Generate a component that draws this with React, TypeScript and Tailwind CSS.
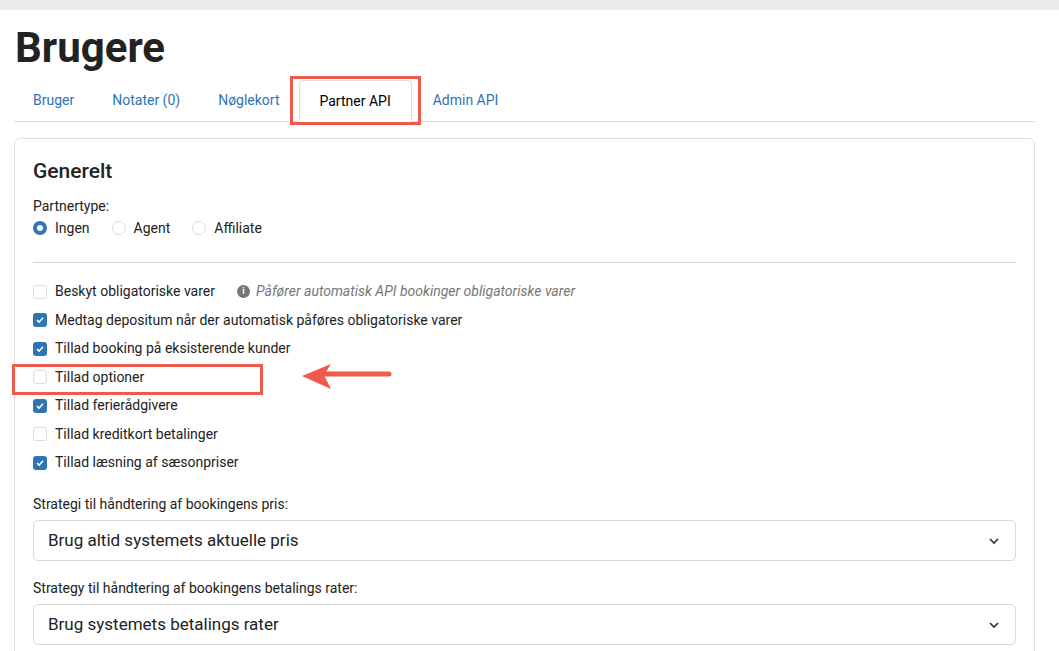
const checks: [string, boolean][] = [
  ["Beskyt obligatoriske varer", false],
  ["Medtag depositum når der automatisk påføres obligatoriske varer", true],
  ["Tillad booking på eksisterende kunder", true],
  ["Tillad optioner", false],
  ["Tillad ferierådgivere", true],
  ["Tillad kreditkort betalinger", false],
  ["Tillad læsning af sæsonpriser", true],
];

function Box({ on }: { on: boolean }) {
  return on ? (
    <span className="w-[14px] h-[14px] rounded-[3px] bg-[#2f74b5] flex items-center justify-center">
      <svg width="10" height="10" viewBox="0 0 10 10"><path d="M2 5.2 4.1 7.2 8 2.8" stroke="white" strokeWidth="1.6" fill="none" /></svg>
    </span>
  ) : (
    <span className="w-[14px] h-[14px] rounded-[3px] border border-[#dcdcdc] bg-white" />
  );
}

function Select({ label, value }: { label: string; value: string }) {
  return (
    <div className="mt-[17px]">
      <div className="text-[14px] text-[#222] mb-[5px]">{label}</div>
      <div className="h-[41px] border border-[#d9d9d9] rounded-[5px] flex items-center justify-between px-[14px] text-[17px] text-[#222]">
        {value}
        <svg width="14" height="14" viewBox="0 0 14 14"><path d="M3 5 7 9 11 5" stroke="#333" strokeWidth="1.7" fill="none" /></svg>
      </div>
    </div>
  );
}

export default function App() {
  return (
    <main className="relative min-h-screen bg-white font-[Roboto,sans-serif] text-[#222] overflow-hidden">
      <div className="h-[10px] bg-[#ebebeb]" />
      <div className="pl-[14px] pr-[24px]">
        <h1 className="text-[42px] font-bold leading-none mt-[17px] ml-[1px] text-[#222]">Brugere</h1>
        {/* TABS */}
        <div className="mt-[11px] flex border-b border-[#dedede] h-[42px] items-stretch text-[14px]">
          <a className="px-[19px] flex items-center text-[#2f74b5]">Bruger</a>
          <a className="px-[19px] flex items-center text-[#2f74b5]">Notater (0)</a>
          <a className="px-[19px] flex items-center text-[#2f74b5]">Nøglekort</a>
          <a className="relative px-[20px] flex items-center bg-white border border-[#dedede] border-b-white -mb-px rounded-t-[4px] text-black">
            Partner API
            <span className="absolute -left-[10px] -right-[10px] -top-[5px] -bottom-[4px] border-[3px] border-[#ee5a4b]" />
          </a>
          <a className="px-[21px] flex items-center text-[#2f74b5]">Admin API</a>
        </div>
        {/* CARD */}
        <section className="mt-[16px] border border-[#dedede] rounded-[6px] px-[18px] pt-[17px] pb-[20px]">
          <h2 className="text-[21px] font-medium">Generelt</h2>
          <div className="mt-[8px] text-[14px]">Partnertype:</div>
          <div className="mt-[1px] flex items-center gap-[22px] text-[14px]">
            <label className="flex items-center gap-[8px]">
              <span className="w-[14px] h-[14px] rounded-full border-[4px] border-[#2f74b5]" />Ingen
            </label>
            <label className="flex items-center gap-[8px]">
              <span className="w-[14px] h-[14px] rounded-full border border-[#dcdcdc]" />Agent
            </label>
            <label className="flex items-center gap-[8px]">
              <span className="w-[14px] h-[14px] rounded-full border border-[#dcdcdc]" />Affiliate
            </label>
          </div>
          <hr className="mt-[23px] border-[#d6d6d6]" />
          <div className="mt-[15px] flex flex-col text-[14px]">
            {checks.map(([t, on], i) => (
              <div key={t} className="relative h-[28.5px] flex items-center gap-[8px]">
                <Box on={on} />
                <span>{t}</span>
                {i === 0 && (
                  <span className="ml-[14px] flex items-center gap-[6px] italic text-[#777]">
                    <span className="w-[13px] h-[13px] rounded-full bg-[#777] text-white text-[9px] not-italic font-bold flex items-center justify-center">i</span>
                    Påfører automatisk API bookinger obligatoriske varer
                  </span>
                )}
                {i === 3 && (
                  <>
                    <span className="absolute -left-[21px] w-[251px] top-[1px] h-[31px] border-[3px] border-[#ee5a4b]" />
                    <svg className="absolute left-[268px] top-[0px]" width="92" height="28" viewBox="0 0 92 28">
                      <path d="M88 11 H24" stroke="#ee5a4b" strokeWidth="5" strokeLinecap="round" />
                      <path d="M1 13 L30 1 L23 12 L30 26 Z" fill="#ee5a4b" />
                    </svg>
                  </>
                )}
              </div>
            ))}
          </div>
          <Select label="Strategi til håndtering af bookingens pris:" value="Brug altid systemets aktuelle pris" />
          <Select label="Strategy til håndtering af bookingens betalings rater:" value="Brug systemets betalings rater" />
        </section>
      </div>
    </main>
  );
}
